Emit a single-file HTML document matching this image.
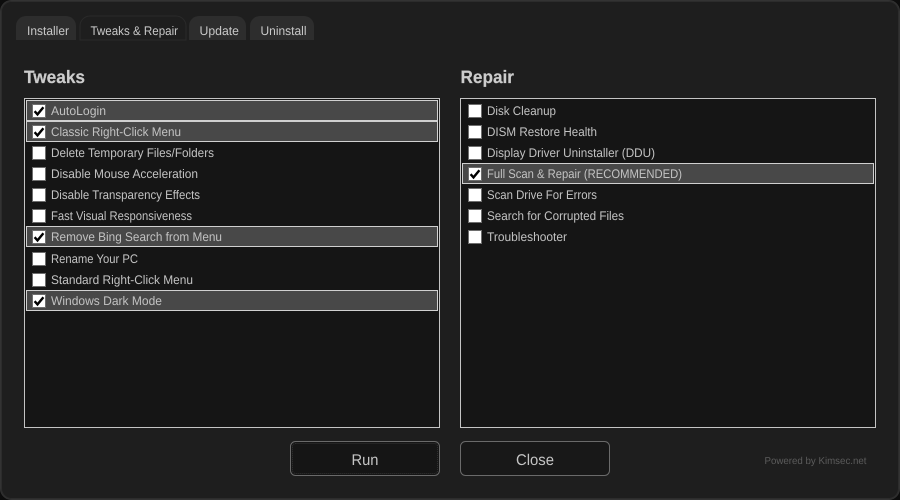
<!DOCTYPE html>
<html><head><meta charset="utf-8"><style>
html,body{margin:0;padding:0;background:#0d0d0d;width:900px;height:500px;overflow:hidden}
svg{display:block}
text{font-family:"Liberation Sans",sans-serif}
.r{font-size:12.5px;fill:#c2c2c2}
.t{font-size:12.5px;fill:#c8c8c8}
.h{font-size:18px;font-weight:bold;fill:#cccccc;stroke:#cccccc;stroke-width:.2px}
.b{font-size:15.5px;fill:#c4c4c4}
</style></head><body>
<svg width="900" height="500" viewBox="0 0 900 500" xmlns="http://www.w3.org/2000/svg" text-rendering="geometricPrecision">
<defs>
<path id="c" d="M-4.4 0.2L-1.5 3.4L4.4-3.8" fill="none" stroke="#000" stroke-width="2.4"/>
</defs>
<rect x="0.5" y="0.5" width="899" height="499" rx="11" fill="#1e1e1e" stroke="#333"/>
<rect x="1.5" y="1.5" width="897" height="497" rx="10" fill="none" stroke="#2c2c2c"/>

<path d="M16 40V26a10 10 0 0 1 10-10H66a10 10 0 0 1 10 10V40Z" fill="#2d2d2d"/>
<path d="M80 40V26a10 10 0 0 1 10-10H176a10 10 0 0 1 10 10V40Z" fill="#1e1e1e" stroke="#2a2a2a"/>
<path d="M189 40V26a10 10 0 0 1 10-10H236a10 10 0 0 1 10 10V40Z" fill="#2d2d2d"/>
<path d="M250 40V26a10 10 0 0 1 10-10H304a10 10 0 0 1 10 10V40Z" fill="#2d2d2d"/>
<text class="t" x="27" y="35" textLength="42" lengthAdjust="spacingAndGlyphs">Installer</text>
<text class="t" x="90.500" y="35" textLength="87.500" lengthAdjust="spacingAndGlyphs">Tweaks &amp; Repair</text>
<text class="t" x="199.500" y="35" textLength="39.500" lengthAdjust="spacingAndGlyphs">Update</text>
<text class="t" x="260.500" y="35" textLength="46" lengthAdjust="spacingAndGlyphs">Uninstall</text>

<text class="h" x="24" y="83" textLength="61" lengthAdjust="spacingAndGlyphs">Tweaks</text>
<text class="h" x="460.500" y="83" textLength="53.500" lengthAdjust="spacingAndGlyphs">Repair</text>

<rect x="24.500" y="98.500" width="415" height="329" fill="#151515" stroke="#c4c4c4"/>
<rect x="460.500" y="98.500" width="415" height="329" fill="#151515" stroke="#c4c4c4"/>

<g fill="#484848" stroke="#d0d0d0">
<rect x="26.500" y="100.500" width="411" height="20"/>
<rect x="26.500" y="121.500" width="411" height="20"/>
<rect x="26.500" y="226.500" width="411" height="20"/>
<rect x="26.500" y="290.500" width="411" height="20"/>
<rect x="462.500" y="163.500" width="411" height="20"/>
</g>

<g fill="#fff" stroke="#6e6e6e" shape-rendering="crispEdges">
<rect x="32.500" y="104.500" width="13" height="13"/>
<rect x="32.500" y="125.500" width="13" height="13"/>
<rect x="32.500" y="146.500" width="13" height="13"/>
<rect x="32.500" y="167.500" width="13" height="13"/>
<rect x="32.500" y="188.500" width="13" height="13"/>
<rect x="32.500" y="209.500" width="13" height="13"/>
<rect x="32.500" y="230.500" width="13" height="13"/>
<rect x="32.500" y="252.500" width="13" height="13"/>
<rect x="32.500" y="273.500" width="13" height="13"/>
<rect x="32.500" y="294.500" width="13" height="13"/>
<rect x="468.500" y="104.500" width="13" height="13"/>
<rect x="468.500" y="125.500" width="13" height="13"/>
<rect x="468.500" y="146.500" width="13" height="13"/>
<rect x="468.500" y="167.500" width="13" height="13"/>
<rect x="468.500" y="188.500" width="13" height="13"/>
<rect x="468.500" y="209.500" width="13" height="13"/>
<rect x="468.500" y="230.500" width="13" height="13"/>
</g>
<use href="#c" x="39" y="111"/>
<use href="#c" x="39" y="132"/>
<use href="#c" x="39" y="237"/>
<use href="#c" x="39" y="301"/>
<use href="#c" x="475" y="174"/>

<text class="r" x="51" y="115" textLength="55" lengthAdjust="spacingAndGlyphs">AutoLogin</text>
<text class="r" x="51" y="136" textLength="130" lengthAdjust="spacingAndGlyphs">Classic Right-Click Menu</text>
<text class="r" x="51" y="157" textLength="163" lengthAdjust="spacingAndGlyphs">Delete Temporary Files/Folders</text>
<text class="r" x="51" y="178" textLength="147" lengthAdjust="spacingAndGlyphs">Disable Mouse Acceleration</text>
<text class="r" x="51" y="199" textLength="149" lengthAdjust="spacingAndGlyphs">Disable Transparency Effects</text>
<text class="r" x="51" y="220" textLength="141" lengthAdjust="spacingAndGlyphs">Fast Visual Responsiveness</text>
<text class="r" x="51" y="241" textLength="171" lengthAdjust="spacingAndGlyphs">Remove Bing Search from Menu</text>
<text class="r" x="51" y="263" textLength="87" lengthAdjust="spacingAndGlyphs">Rename Your PC</text>
<text class="r" x="51" y="284" textLength="142" lengthAdjust="spacingAndGlyphs">Standard Right-Click Menu</text>
<text class="r" x="51" y="305" textLength="111" lengthAdjust="spacingAndGlyphs">Windows Dark Mode</text>

<text class="r" x="487" y="115" textLength="69" lengthAdjust="spacingAndGlyphs">Disk Cleanup</text>
<text class="r" x="487" y="136" textLength="110" lengthAdjust="spacingAndGlyphs">DISM Restore Health</text>
<text class="r" x="487" y="157" textLength="168" lengthAdjust="spacingAndGlyphs">Display Driver Uninstaller (DDU)</text>
<text class="r" x="487" y="178" textLength="195" lengthAdjust="spacingAndGlyphs">Full Scan &amp; Repair (RECOMMENDED)</text>
<text class="r" x="487" y="199" textLength="110" lengthAdjust="spacingAndGlyphs">Scan Drive For Errors</text>
<text class="r" x="487" y="220" textLength="137" lengthAdjust="spacingAndGlyphs">Search for Corrupted Files</text>
<text class="r" x="487" y="241" textLength="80" lengthAdjust="spacingAndGlyphs">Troubleshooter</text>

<rect x="290.500" y="441.500" width="149" height="34" rx="5" fill="#151515" stroke="#6a6a6a"/>
<rect x="292.500" y="443.500" width="145" height="30" rx="3" fill="none" stroke="#333" stroke-dasharray="1 1"/>
<rect x="460.500" y="441.500" width="149" height="34" rx="5" fill="#181818" stroke="#6a6a6a"/>
<text class="b" x="351.500" y="465" textLength="27" lengthAdjust="spacingAndGlyphs">Run</text>
<text class="b" x="516" y="465" textLength="38" lengthAdjust="spacingAndGlyphs">Close</text>
<text x="764.500" y="464" font-size="10" fill="#5c5c5c" textLength="102" lengthAdjust="spacingAndGlyphs">Powered by Kimsec.net</text>
</svg>
</body></html>
